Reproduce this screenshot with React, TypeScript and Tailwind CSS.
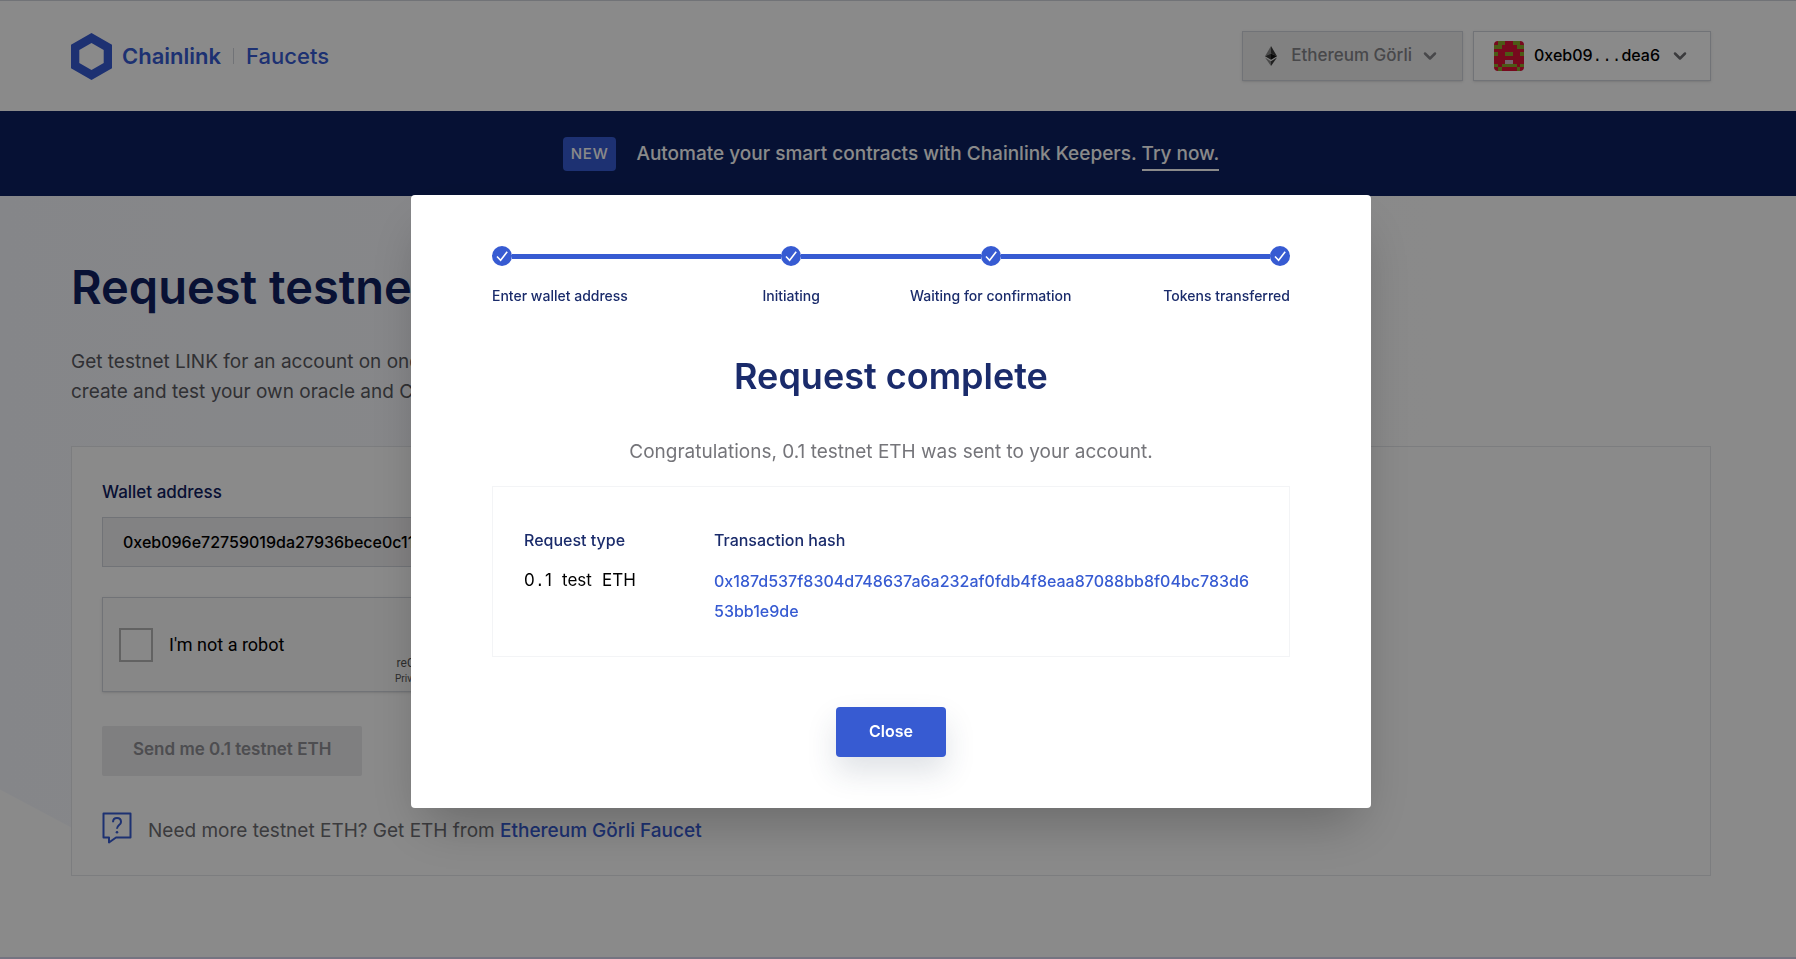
import { Fragment } from 'react';
import { ChevronDown } from 'lucide-react';

const STEPS = ['Enter wallet address', 'Initiating', 'Waiting for confirmation', 'Tokens transferred'];

const WALLET = '0xeb096e72759019da27936bece0c11a5ef0c9dea6';
const TX_HASH = '0x187d537f8304d748637a6a232af0fdb4f8eaa87088bb8f04bc783d653bb1e9de';

// r = red, g = green, w = light
const BLOCKIE = ['rggrrggr', 'ggrrrrgg', 'rrrrrrrr', 'grrggrrg', 'rrrrrrrr', 'rrrwwrrr', 'grggggrg', 'rgrrrrgr'];
const BLOCKIE_COLORS: Record<string, string> = { r: '#dc1136', g: '#8da62a', w: '#d8b8cc' };

function Blockie() {
  return (
    <svg viewBox="0 0 8 8" className="h-[30px] w-[30px] rounded" shapeRendering="crispEdges" aria-hidden="true">
      {BLOCKIE.map((row, y) =>
        row.split('').map((cell, x) => (
          <rect key={`${x}-${y}`} x={x} y={y} width="1" height="1" fill={BLOCKIE_COLORS[cell]} />
        )),
      )}
    </svg>
  );
}

function EthIcon() {
  return (
    <svg viewBox="0 0 12 20" className="h-5 w-3" aria-hidden="true">
      <path d="M6 0 0 10.2 6 7.5Z" fill="#8a8a8a" />
      <path d="M6 0v7.5l6 2.7Z" fill="#3c3c3b" />
      <path d="M0 10.2 6 13.8V7.5Z" fill="#3c3c3b" />
      <path d="M6 7.5v6.3l6-3.6Z" fill="#111" />
      <path d="M0 11.6 6 20v-4.8Z" fill="#8a8a8a" />
      <path d="M6 15.2V20l6-8.4Z" fill="#3c3c3b" />
    </svg>
  );
}

function Header() {
  return (
    <header className="border-t border-gray-300 bg-white">
      <div className="flex h-[110px] items-center justify-between pr-[85px] pl-[71px]">
        <a href="#" className="flex items-center text-[22px] font-medium text-[#375bd2]">
          <svg viewBox="0 0 41 47" className="mr-[10px] h-[47px] w-[41px]" aria-hidden="true">
            <path
              fillRule="evenodd"
              fill="#375bd2"
              d="M20.5 0 41 11.8v23.4L20.5 47 0 35.2V11.8ZM20.5 10 8.3 17v13l12.2 7 12.2-7V17Z"
            />
          </svg>
          <span className="font-semibold">Chainlink</span>
          <span className="mx-3 h-4 w-px bg-gray-300" />
          <span>Faucets</span>
        </a>
        <div className="flex gap-[10px]">
          <button
            type="button"
            className="flex h-[50px] items-center border border-gray-300 bg-[#efefef] px-[22px] text-[17px] font-medium text-[#85858a] shadow-sm"
          >
            <EthIcon />
            <span className="mr-2 ml-[14px]">Ethereum Görli</span>
            <ChevronDown size={20} strokeWidth={3} />
          </button>
          <button
            type="button"
            className="flex h-[50px] items-center border border-gray-300 bg-white px-5 text-base font-medium text-black shadow-sm"
          >
            <Blockie />
            <span className="mr-[10px] ml-[10px]">
              0xeb09<span className="font-['Liberation_Mono',monospace]">...</span>dea6
            </span>
            <ChevronDown size={20} strokeWidth={3} className="text-[#6d6d72]" />
          </button>
        </div>
      </div>
    </header>
  );
}

function Banner() {
  return (
    <div className="flex h-[85px] items-center justify-center bg-[#0c2160] pr-[14px] text-[19px] font-medium text-white">
      <span className="mr-5 rounded bg-[#375bd2] px-2 py-[7px] text-[15px] leading-5 font-medium tracking-wider">
        NEW
      </span>
      <p className="pt-[2px]">
        Automate your smart contracts with Chainlink Keepers.{' '}
        <a href="#" className="border-b-2 border-white pb-1">
          Try now.
        </a>
      </p>
    </div>
  );
}

function Captcha() {
  return (
    <div className="mt-[30px] flex h-[95px] w-[380px] items-center border border-gray-300 bg-[#f9f9f9] shadow-sm">
      <input
        id="robot"
        type="checkbox"
        className="ml-4 h-[34px] w-[34px] appearance-none border-2 border-[#b5b5b5] bg-[#fcfcfc]"
      />
      <label htmlFor="robot" className="ml-4 font-[Roboto,sans-serif] text-lg text-black">
        I'm not a robot
      </label>
      <div className="mr-[18px] ml-auto self-end pb-1 text-center font-[Roboto,sans-serif] text-[#555]">
        <p className="text-xs leading-4">reCAPTCHA</p>
        <p className="text-[10px] leading-4">Privacy - Terms</p>
      </div>
    </div>
  );
}

function HelpIcon() {
  return (
    <svg viewBox="0 0 30 32" className="h-8 w-[30px]" fill="none" stroke="#375bd2" strokeWidth="2" aria-hidden="true">
      <path d="M1.5 1.5h27v24H14l-7 5v-5H1.5Z" strokeLinejoin="round" />
      <path d="M11 10.2c0-2.6 1.7-4.2 4-4.2s4 1.6 4 3.9c0 3.3-4 3.1-4 6.9" />
      <circle cx="15" cy="20.3" r="1.3" fill="#375bd2" stroke="none" />
    </svg>
  );
}

function Page() {
  return (
    <main className="relative flex-1 border-b-2 border-[#d8d6ee] pt-[60px] pr-[85px] pb-20 pl-[71px]">
      <div className="absolute inset-0 bg-linear-to-r from-[#f6f8fe] to-white to-80% [clip-path:polygon(0_0,100%_0,60%_60%,18%_88%,4%_83%,0_78%)]" />
      <div className="relative">
        <h1 className="text-[47px] leading-[62px] font-semibold text-[#0f2060]">Request testnet LINK</h1>
        <p className="mt-[29px] max-w-[860px] text-[19px] leading-[30px] text-[#5a5a60]">
          Get testnet LINK for an account on one of the supported blockchain testnets so you can
          <br />
          create and test your own oracle and Chainlinked smart contract
        </p>
        <form className="mt-[39px] border border-gray-200 bg-white px-[30px] pt-[30px] pb-[31px]">
          <label htmlFor="wallet" className="block text-[17px] leading-[30px] font-medium text-[#0f2060]">
            Wallet address
          </label>
          <input
            id="wallet"
            readOnly
            value={WALLET}
            className="mt-[10px] h-[50px] w-full max-w-[760px] border border-gray-300 bg-[#f1f0f2] px-5 text-base font-medium text-black"
          />
          <Captcha />
          <button
            type="button"
            disabled
            className="mt-[34px] h-[50px] rounded-xs bg-[#eaeaec] px-[31px] pb-[2px] text-[17px] font-semibold text-[#8f8f94]"
          >
            Send me 0.1 testnet ETH
          </button>
          <div className="mt-[36px] flex items-end gap-4 text-[19px] leading-[26px] text-[#6d6d72]">
            <HelpIcon />
            <p>
              Need more testnet ETH? Get ETH from{' '}
              <a href="#" className="font-medium text-[#375bd2]">
                Ethereum Görli Faucet
              </a>
            </p>
          </div>
        </form>
      </div>
    </main>
  );
}

function StepMark() {
  return (
    <svg viewBox="0 0 20 20" className="h-5 w-5 shrink-0" aria-hidden="true">
      <circle cx="10" cy="10" r="10" fill="#375bd2" />
      <path d="m5 10.5 3.6 3.7L15.2 5.8" fill="none" stroke="#fff" strokeWidth="1.6" />
    </svg>
  );
}

function Steps() {
  return (
    <ol className="grid grid-cols-4 text-sm font-medium text-[#1a2b6b]">
      {STEPS.map((label, i) => {
        const first = i === 0;
        const last = i === STEPS.length - 1;
        return (
          <li key={label} className={first ? 'text-left' : last ? 'text-right' : 'text-center'}>
            <div className="flex items-center">
              {!first && <span className="h-[5px] flex-1 bg-[#375bd2]" />}
              <StepMark />
              {!last && <span className="h-[5px] flex-1 bg-[#375bd2]" />}
            </div>
            <span className="mt-5 block leading-5 whitespace-nowrap">{label}</span>
          </li>
        );
      })}
    </ol>
  );
}

function RequestModal() {
  const words = ['0.1', 'test', 'ETH'];
  return (
    <div className="fixed inset-0 flex items-start justify-center bg-black/46 pt-[195px] pr-[14px]">
      <section
        role="dialog"
        aria-modal="true"
        aria-labelledby="modal-title"
        className="w-full max-w-[960px] rounded bg-white px-[81px] pt-[51px] pb-[51px] text-center shadow-2xl"
      >
        <Steps />
        <h2 id="modal-title" className="mt-[45px] text-[36px] leading-[50px] font-semibold text-[#1a2b6b]">
          Request complete
        </h2>
        <p className="mt-[36px] text-[19px] leading-[30px] text-[#75757a]">
          Congratulations, 0.1 testnet ETH was sent to your account.
        </p>
        <dl className="mt-[19px] grid grid-cols-[190px_1fr] border border-gray-100 px-[31px] pt-[38px] pb-[30px] text-left">
          <div>
            <dt className="leading-[30px] font-medium text-[#1a2b6b]">Request type</dt>
            <dd className="mt-[10px] text-[17px] leading-[30px] text-black">
              {words.map((word, i) => (
                <Fragment key={word}>
                  {i > 0 && <span className="font-['Liberation_Mono',monospace]"> </span>}
                  {word.split('.').map((part, n) => (
                    <Fragment key={part}>
                      {n > 0 && <span className="font-['Liberation_Mono',monospace]">.</span>}
                      {part}
                    </Fragment>
                  ))}
                </Fragment>
              ))}
            </dd>
          </div>
          <div>
            <dt className="leading-[30px] font-medium text-[#1a2b6b]">Transaction hash</dt>
            <dd className="mt-[11px] leading-[30px] font-medium break-all text-[#375bd2]">
              <a href="#">{TX_HASH}</a>
            </dd>
          </div>
        </dl>
        <button
          type="button"
          className="mt-[50px] h-[50px] rounded bg-[#375bd2] px-[33px] pb-[2px] text-base font-semibold text-white shadow-[0_15px_30px_rgba(40,60,90,0.15)]"
        >
          Close
        </button>
      </section>
    </div>
  );
}

export default function App() {
  return (
    <div className="flex min-h-screen flex-col bg-white font-[Inter,'Liberation_Sans',sans-serif]">
      <Header />
      <Banner />
      <Page />
      <RequestModal />
    </div>
  );
}
